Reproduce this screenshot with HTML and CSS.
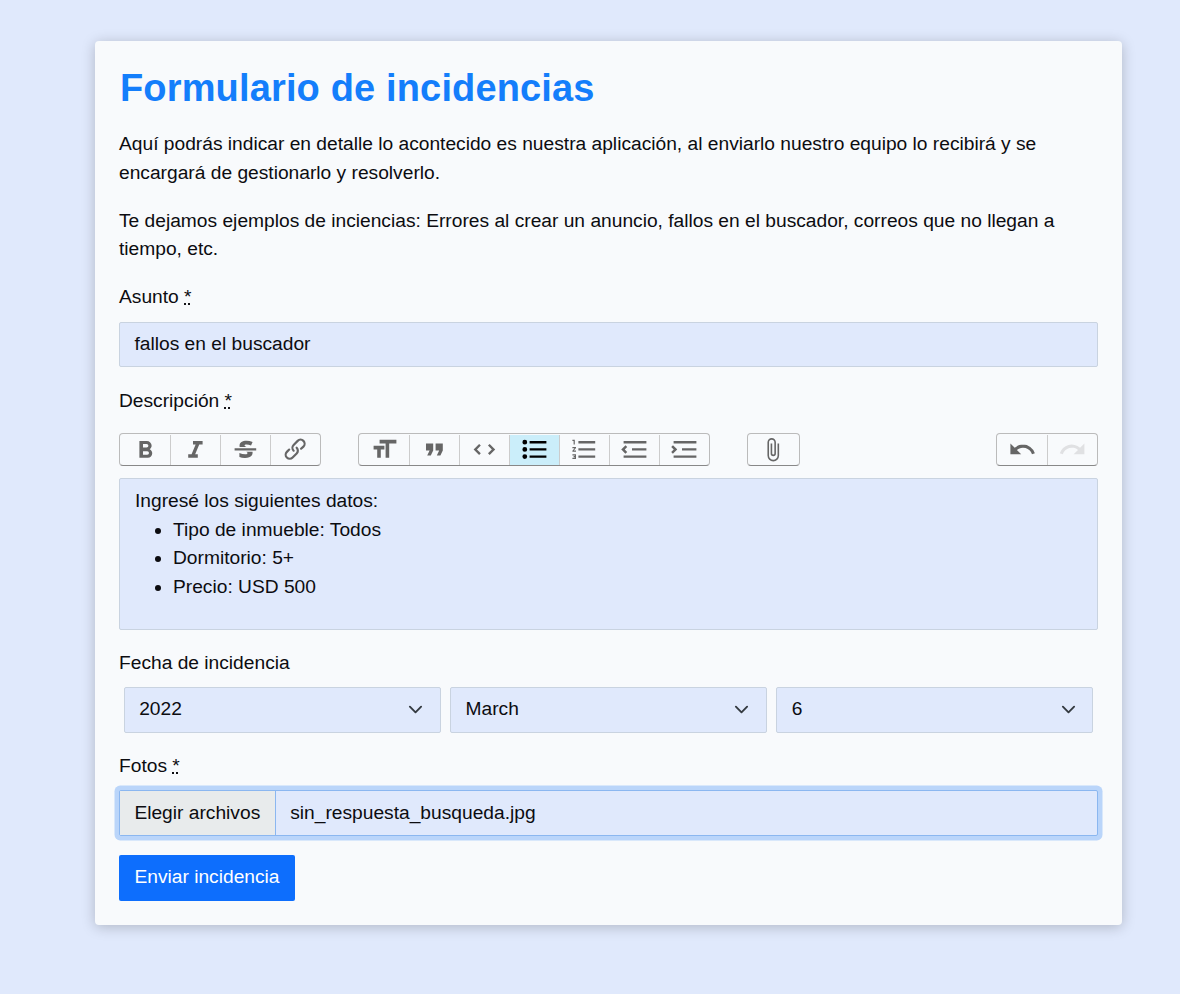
FILE: index.html
```html
<!DOCTYPE html>
<html lang="es">
<head>
<meta charset="utf-8">
<title>Formulario de incidencias</title>
<link rel="stylesheet" href="styles.css">
</head>
<body>
<main class="card">
  <h1 class="title">Formulario de incidencias</h1>
  <p class="intro">Aquí podrás indicar en detalle lo acontecido es nuestra aplicación, al enviarlo nuestro equipo lo recibirá y se encargará de gestionarlo y resolverlo.</p>
  <p class="intro">Te dejamos ejemplos de inciencias: Errores al crear un anuncio, fallos en el buscador, correos que no llegan a tiempo, etc.</p>

  <div class="label">Asunto <abbr class="req">*</abbr></div>
  <div class="field subject">fallos en el buscador</div>

  <div class="label">Descripción <abbr class="req">*</abbr></div>
  <div class="toolbar">
    <div class="group">
      <span class="tool"><svg class="icon" viewBox="0 0 24 24"><path d="M15.6 11.8c1-.7 1.6-1.8 1.6-2.8a4 4 0 0 0-4-4H7v14h7c2.1 0 3.7-1.7 3.7-3.8 0-1.5-.8-2.8-2.1-3.4zM10 7.5h3a1.5 1.5 0 1 1 0 3h-3v-3zm3.5 9H10v-3h3.5a1.5 1.5 0 1 1 0 3z"/></svg></span>
      <span class="tool"><svg class="icon" viewBox="0 0 24 24"><path d="M10 5v3h2.2l-3.4 8H6v3h8v-3h-2.2l3.4-8H18V5h-8z"/></svg></span>
      <span class="tool"><svg class="icon" viewBox="0 0 24 24"><path d="M12.73 14l.28.14c.26.15.45.3.57.44.12.14.18.3.18.5 0 .3-.15.56-.44.75-.3.2-.76.3-1.39.3A13.52 13.52 0 0 1 7 14.95v3.37a10.64 10.64 0 0 0 4.84.88c1.26 0 2.35-.19 3.28-.56.93-.37 1.64-.9 2.14-1.57s.74-1.45.74-2.32c0-.26-.02-.51-.06-.75h-5.21zm-5.5-4c-.08-.34-.12-.7-.12-1.1 0-1.29.52-2.3 1.58-3.02 1.05-.72 2.5-1.08 4.34-1.08 1.62 0 3.28.34 4.97 1l-1.3 2.93c-1.47-.6-2.73-.9-3.8-.9-.55 0-.96.08-1.2.26-.26.17-.38.38-.38.64 0 .27.16.52.48.74.17.12.53.3 1.05.53H7.23zM3 13h18v-2H3v2z"/></svg></span>
      <span class="tool"><svg class="icon" viewBox="0 0 24 24"><path d="M9.88 13.7a4.3 4.3 0 0 1 0-6.07l3.37-3.37a4.26 4.26 0 0 1 6.07 0 4.3 4.3 0 0 1 0 6.06l-1.96 1.72a.91.91 0 1 1-1.3-1.3l1.97-1.71a2.46 2.46 0 0 0-3.48-3.48l-3.38 3.37a2.46 2.46 0 0 0 0 3.48.91.91 0 1 1-1.3 1.3z"/><path d="M4.25 19.46a4.3 4.3 0 0 1 0-6.07l1.93-1.9a.91.91 0 1 1 1.3 1.3l-1.93 1.9a2.46 2.46 0 0 0 3.48 3.48l3.37-3.38c.96-.96.96-2.52 0-3.48a.91.91 0 1 1 1.3-1.3 4.3 4.3 0 0 1 0 6.07l-3.38 3.38a4.26 4.26 0 0 1-6.07 0z"/></svg></span>
    </div>
    <div class="group">
      <span class="tool"><svg class="icon" viewBox="0 0 24 24"><path d="M12 9v3H9v7H6v-7H3V9h9zM8 4h14v3h-6v12h-3V7H8V4z"/></svg></span>
      <span class="tool"><svg class="icon" viewBox="0 0 24 24"><path d="M6 17h3l2-4V7H5v6h3zm8 0h3l2-4V7h-6v6h3z"/></svg></span>
      <span class="tool"><svg class="icon" viewBox="0 0 24 24"><path d="M18.2 12L15 15.2l1.4 1.4L21 12l-4.6-4.6L15 8.8l3.2 3.2zM5.8 12L9 8.8 7.6 7.4 3 12l4.6 4.6L9 15.2 5.8 12z"/></svg></span>
      <span class="tool active"><svg class="icon" viewBox="0 0 24 24"><path d="M4 4a2 2 0 1 0 0 4 2 2 0 0 0 0-4zm0 6a2 2 0 1 0 0 4 2 2 0 0 0 0-4zm0 6a2 2 0 1 0 0 4 2 2 0 0 0 0-4zm4 3h14v-2H8v2zm0-6h14v-2H8v2zm0-8v2h14V5H8z"/></svg></span>
      <span class="tool"><svg class="icon" viewBox="0 0 24 24"><path d="M2 17h2v.5H3v1h1v.5H2v1h3v-4H2v1zm1-9h1V4H2v1h1v3zm-1 3h1.8L2 13.1v.9h3v-1H3.2L5 10.9V10H2v1zm5-6v2h14V5H7zm0 14h14v-2H7v2zm0-6h14v-2H7v2z"/></svg></span>
      <span class="tool"><svg class="icon" viewBox="0 0 24 24"><path d="M3 19h19v-2H3v2zm7-6h12v-2H10v2zm-8.3-.3l2.8 2.9L6 14.2 4 12l2-2-1.4-1.5L1 12l.7.7zM3 5v2h19V5H3z"/></svg></span>
      <span class="tool"><svg class="icon" viewBox="0 0 24 24"><path d="M3 19h19v-2H3v2zm7-6h12v-2H10v2zm-6.9-1L1 14.2l1.4 1.4L6 12l-.7-.7-2.8-2.8L1 9.9 3.1 12zM3 5v2h19V5H3z"/></svg></span>
    </div>
    <div class="group">
      <span class="tool"><svg class="icon attach" viewBox="0 0 24 24"><path d="M16.5 6v11.5a4 4 0 1 1-8 0V5a2.5 2.5 0 0 1 5 0v10.5a1 1 0 1 1-2 0V6H10v9.5a2.5 2.5 0 0 0 5 0V5a4 4 0 1 0-8 0v12.5a5.5 5.5 0 0 0 11 0V6h-1.5z"/></svg></span>
    </div>
    <div class="group history">
      <span class="tool"><svg class="icon" viewBox="0 0 24 24"><path d="M12.5 8c-2.6 0-5 1-6.9 2.6L2 7v9h9l-3.6-3.6A8 8 0 0 1 20 16l2.4-.8a10.5 10.5 0 0 0-10-7.2z"/></svg></span>
      <span class="tool disabled"><svg class="icon" viewBox="0 0 24 24"><path d="M18.4 10.6a10.5 10.5 0 0 0-16.9 4.6L4 16a8 8 0 0 1 12.7-3.6L13 16h9V7l-3.6 3.6z"/></svg></span>
    </div>
  </div>
  <div class="field editor">
    <div>Ingresé los siguientes datos:</div>
    <ul class="list">
      <li>Tipo de inmueble: Todos</li>
      <li>Dormitorio: 5+</li>
      <li>Precio: USD 500</li>
    </ul>
  </div>

  <div class="label tight">Fecha de incidencia</div>
  <div class="dates">
    <div class="field select">2022<svg class="chevron" viewBox="0 0 16 16"><path d="M2 5l6 6 6-6"/></svg></div>
    <div class="field select">March<svg class="chevron" viewBox="0 0 16 16"><path d="M2 5l6 6 6-6"/></svg></div>
    <div class="field select">6<svg class="chevron" viewBox="0 0 16 16"><path d="M2 5l6 6 6-6"/></svg></div>
  </div>

  <div class="label tight">Fotos <abbr class="req">*</abbr></div>
  <div class="field file"><span class="choose">Elegir archivos</span><span class="filename">sin_respuesta_busqueda.jpg</span></div>
  <button class="submit" type="button">Enviar incidencia</button>
</main>
</body>
</html>
```
FILE: styles.css
```css
* { box-sizing: border-box; }

body {
  margin: 0;
  padding: 41px 58px 0 95px;
  min-height: 994px;
  background: #e0e9fc;
  color: #0c0c10;
  font: 19.2px/28.6px "Liberation Sans", Arial, sans-serif;
}

.card {
  height: 884px;
  padding: 24px;
  background: #f8fafc;
  border-radius: 4px;
  box-shadow: 0 2px 14px rgba(0, 0, 0, .22);
}

.title {
  margin: 0 0 19px;
  padding-left: 1px;
  color: #147efb;
  font-size: 38px;
  line-height: 46px;
  letter-spacing: .15px;
}

.intro { margin: 0 0 19.4px; }

.intro + .label { margin-top: -1px; }

.label { height: 29px; margin-bottom: 11px; padding-top: 1px; }
.tight { margin-bottom: 10px; }

.req { text-decoration: underline dotted; text-underline-offset: 0; }

.field {
  border: 1px solid #c9d3e0;
  border-radius: 2px;
  background: #e0e9fc;
}

.subject { height: 45px; margin-bottom: 19px; padding: 7px 14.5px; }

.toolbar { display: flex; height: 33px; margin: 18px 0 12px; }

.group {
  display: flex;
  margin-right: 37px;
  padding-top: 1px;
  border: 1px solid #bbb;
  border-bottom-color: #888;
  border-radius: 4px;
}

.history { margin: 0 0 0 auto; }

.tool {
  display: flex;
  align-items: center;
  justify-content: center;
  width: 50px;
}

.tool + .tool { border-left: 1px solid #ccc; }
.tool:only-child { width: 51px; }
.icon { width: 28.8px; height: 28.8px; margin-top: -1.5px; fill: #666; }
.attach { width: 25.5px; height: 25.5px; margin: 0 1px 0 0; }
.active { background: #cbeefa; }
.active .icon { fill: #000; }
.disabled .icon { fill: #e0e1e3; }

.editor { height: 152px; margin-bottom: 18px; padding: 8px 15px; }

.list { margin: 0; padding-left: 38px; }

.dates {
  display: grid;
  grid-template-columns: repeat(3, 1fr);
  gap: 9.6px;
  margin: 0 4.8px 18px;
}

.select {
  display: flex;
  justify-content: space-between;
  height: 46px;
  padding: 7px 16.5px 0 14.4px;
}

.chevron {
  width: 15px;
  height: 15px;
  margin-top: 7px;
  fill: none;
  stroke: #343a40;
  stroke-width: 2;
  stroke-linecap: round;
  stroke-linejoin: round;
}

.file {
  display: flex;
  height: 46px;
  margin-bottom: 19px;
  border-color: #8bb7f0;
  box-shadow: 0 0 0 4.5px #bad5fa;
}

.choose {
  padding: 8px 15px 0 14.4px;
  border-right: 1px solid #8bb7f0;
  background: #e8ebec;
}

.filename { padding: 8px 14px 0; }

.submit {
  display: block;
  width: 176px;
  height: 46px;
  padding: 0 0 2px;
  border: 0;
  border-radius: 2px;
  background: #0d6efd;
  color: #fff;
  font: inherit;
}
```
